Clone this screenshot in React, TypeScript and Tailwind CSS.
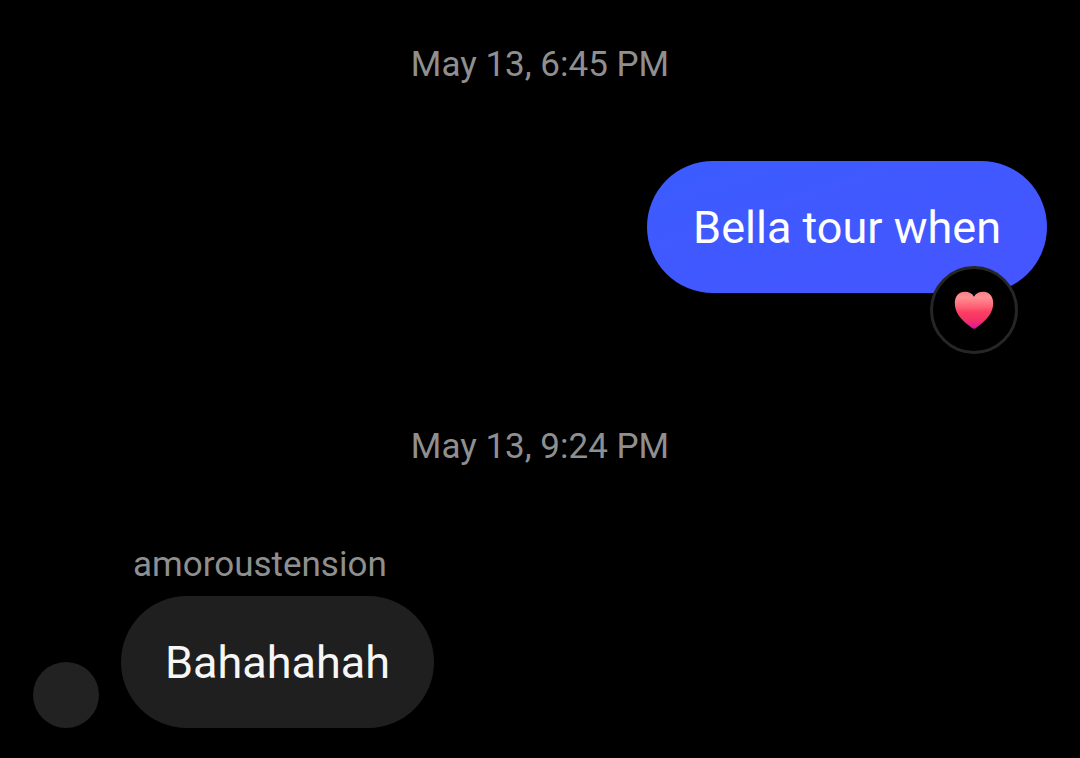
type Message = {
  id: number;
  sentAt: string;
  text: string;
  author?: string;
  liked?: boolean;
};

const messages: Message[] = [
  { id: 1, sentAt: "May 13, 6:45 PM", text: "Bella tour when", liked: true },
  { id: 2, sentAt: "May 13, 9:24 PM", text: "Bahahahah", author: "amoroustension" },
];

function Heart() {
  return (
    <svg className="h-10 w-10" viewBox="0 0 40 40" role="img" aria-label="Heart">
      <defs>
        <linearGradient id="heart-fill" x1="0" y1="0" x2="0" y2="1">
          <stop offset="0" stopColor="#f97f86" />
          <stop offset="0.15" stopColor="#ff9094" />
          <stop offset="0.4" stopColor="#ff6276" />
          <stop offset="0.55" stopColor="#fb3f62" />
          <stop offset="0.78" stopColor="#f52f68" />
          <stop offset="1" stopColor="#dc12a4" />
        </linearGradient>
      </defs>
      <path
        fill="url(#heart-fill)"
        d="M20 38.8C18.7 38.8 17 37.2 14.2 35C6.4 28.9 0.8 22 0.8 13.2C0.8 6.2 4.9 1.8 10.8 1.8C14.9 1.8 18.3 3.6 20 6.8C21.7 3.6 25.1 1.8 29.2 1.8C35.1 1.8 39.2 6.2 39.2 13.2C39.2 22 33.6 28.9 25.8 35C23 37.2 21.3 38.8 20 38.8Z"
      />
    </svg>
  );
}

function SentMessage({ message }: { message: Message }) {
  return (
    <div className="flex justify-end pr-[33px]">
      <div className="relative rounded-[66px] bg-gradient-to-br from-[#3b5cff] to-[#4655ff] px-[46px] pb-[35px] pt-[37px]">
        <p className="text-[45px] leading-[60px] text-white">{message.text}</p>
        {message.liked && (
          <button
            type="button"
            aria-label="Reactions"
            className="absolute -bottom-[61px] right-[29px] flex h-[88px] w-[88px] items-center justify-center rounded-full border-3 border-[#262626] bg-black"
          >
            <Heart />
          </button>
        )}
      </div>
    </div>
  );
}

function ReceivedMessage({ message }: { message: Message }) {
  return (
    <div className="flex items-end gap-[22px] pl-[33px]">
      <div className="h-[66px] w-[66px] shrink-0 rounded-full bg-[#222222]" />
      <div className="flex flex-col items-start gap-[9px]">
        <p className="pl-3 text-[35px] leading-[44px] text-[#8f8f8f]">{message.author}</p>
        <div className="rounded-[66px] bg-[#1f1f1f] px-11 pb-[35px] pt-[37px]">
          <p className="text-[45px] leading-[60px] text-[#f6f6f6]">{message.text}</p>
        </div>
      </div>
    </div>
  );
}

export default function App() {
  return (
    <main className="min-h-screen bg-black pb-[30px] pt-[43px] font-['Roboto',sans-serif]">
      <ol className="flex flex-col gap-[132px]">
        {messages.map((message) => (
          <li key={message.id} className="flex flex-col gap-[74px]">
            <time className="text-center text-[35px] leading-[44px] text-[#8f8f8f]">
              {message.sentAt}
            </time>
            {message.author ? (
              <ReceivedMessage message={message} />
            ) : (
              <SentMessage message={message} />
            )}
          </li>
        ))}
      </ol>
    </main>
  );
}
